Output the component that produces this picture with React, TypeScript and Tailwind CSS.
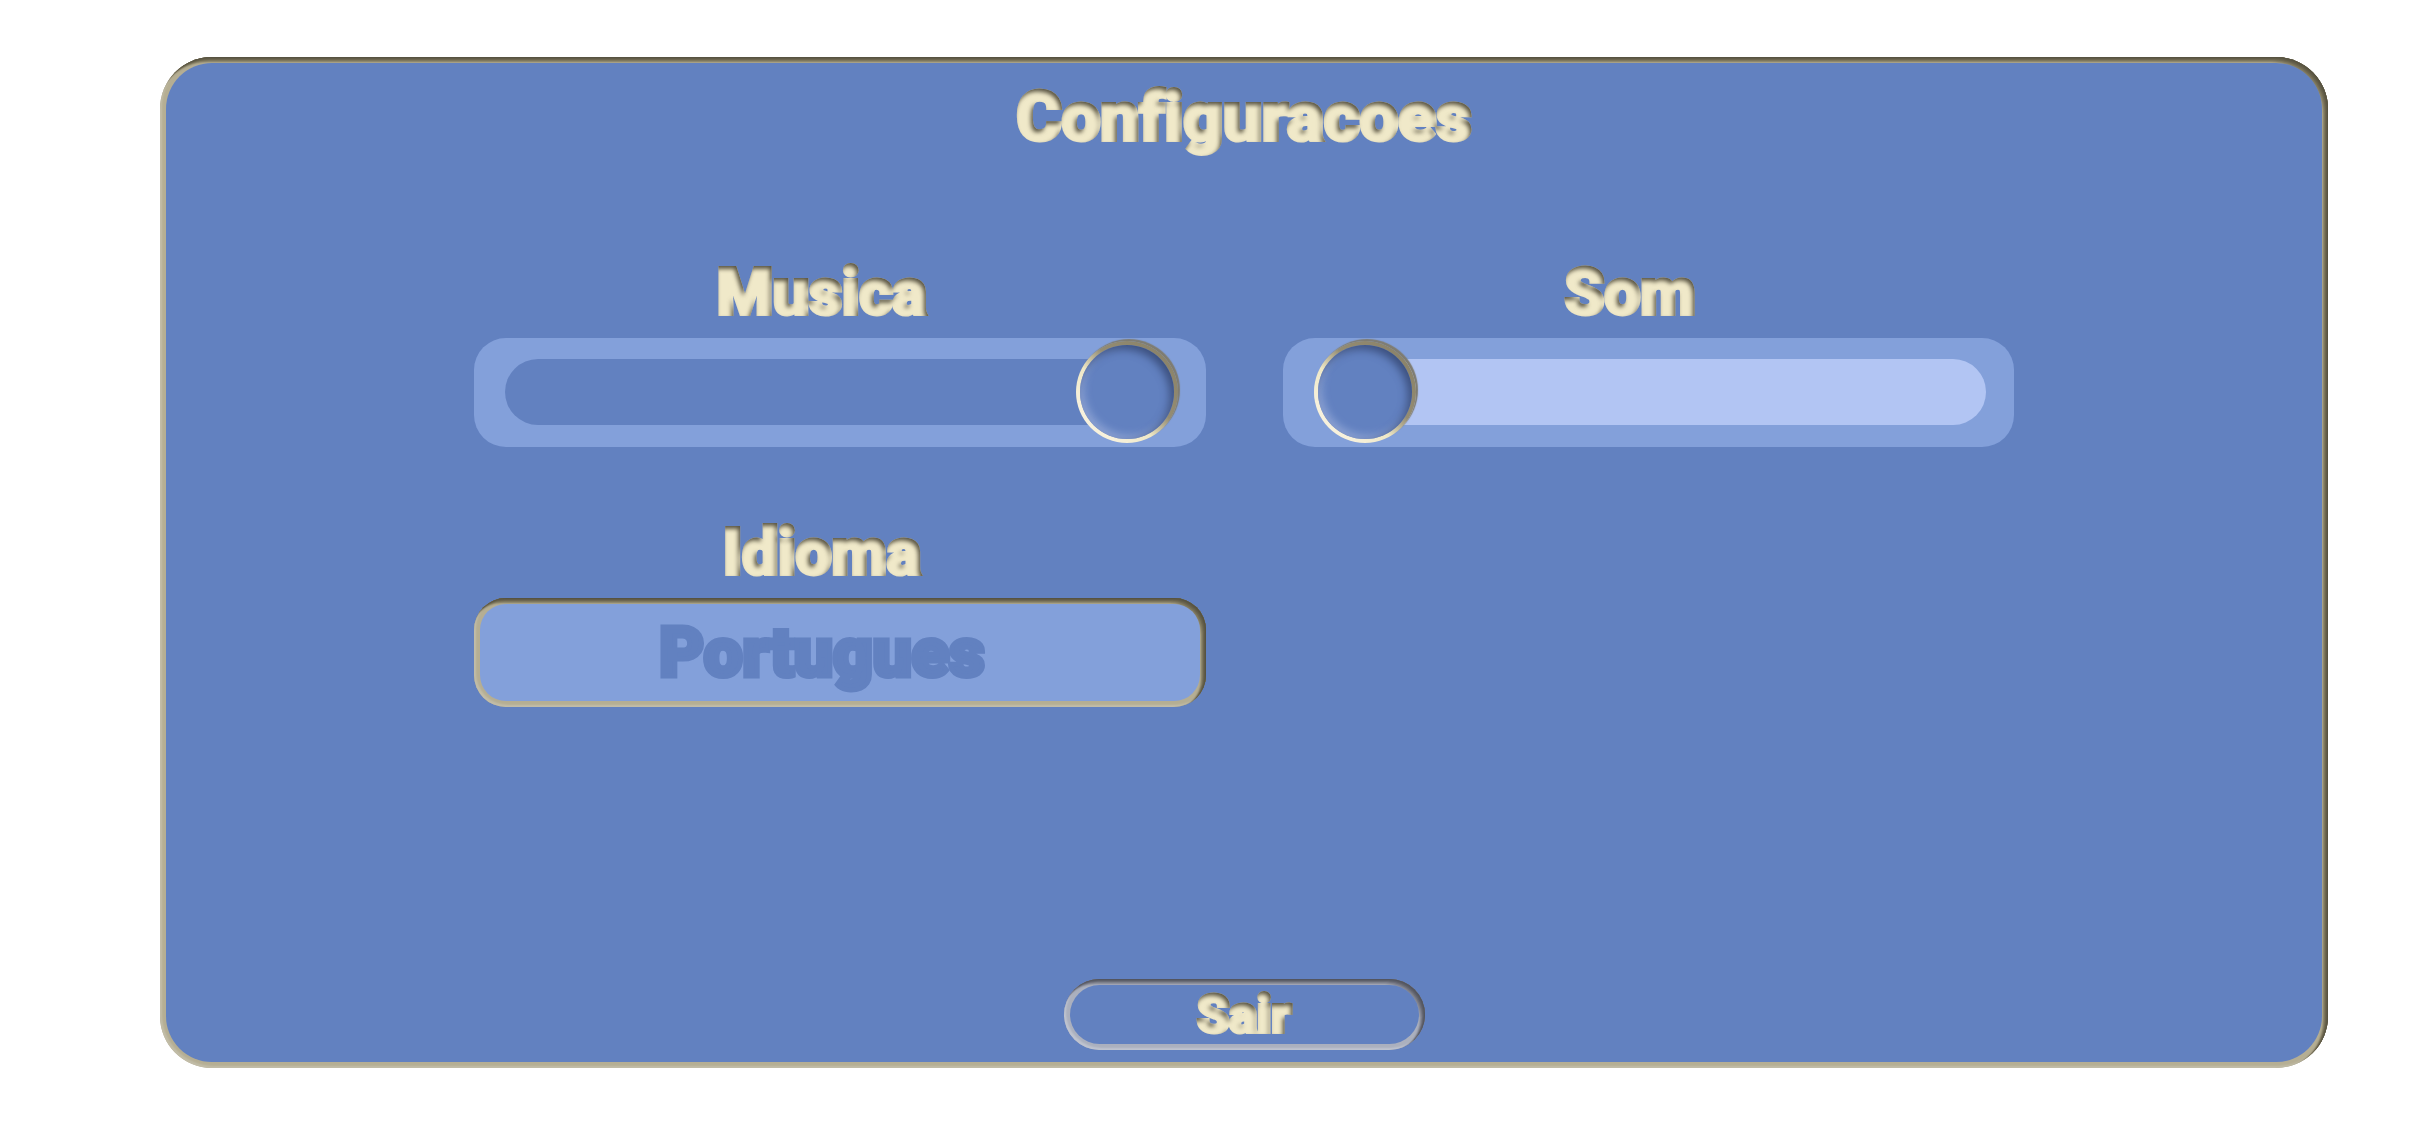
import { useId, useState } from 'react';
import type { CSSProperties, ReactNode } from 'react';

const LANGUAGES = ['Portugues', 'English', 'Espanol'];

// Stacked inset shadows: dark on the top and right edges, light on the others
const GOLD_BEVEL =
  'p-1.5 bg-[#b5ae93] shadow-[inset_-1px_1px_1px_#575341,inset_-2px_2px_1px_#625d49,inset_-3px_3px_1px_#6e6851,inset_-4px_4px_2px_#7b755c,inset_-5px_5px_2px_#8b846a,inset_2px_-2px_2px_#c2bda8]';
const SILVER_BEVEL =
  'p-1.5 bg-[#abb0be] shadow-[inset_-1px_1px_1px_#53555f,inset_-2px_2px_1px_#5e606a,inset_-3px_3px_1px_#6c6e79,inset_-4px_4px_2px_#7c7e8a,inset_-5px_5px_2px_#8c8f9b,inset_2px_-2px_2px_#bfc4d0]';

const LETTERING = "font-['Roboto','Liberation_Sans',sans-serif] font-black [font-variant-ligatures:none]";
const CARVED = 'text-[#f0e9c9] [-webkit-text-stroke:4px_#f0e9c9] [filter:url(#carved)]';

export default function App() {
  const [music, setMusic] = useState(100);
  const [sound, setSound] = useState(0);
  const [language, setLanguage] = useState(LANGUAGES[0]);

  return (
    <main className={`flex min-h-screen bg-white pt-[57px] pr-[108px] pb-[57px] pl-40 ${LETTERING}`}>
      <CarvedFilter />
      <section className={`flex flex-1 rounded-[52px] ${GOLD_BEVEL}`}>
        <div className="flex flex-1 flex-col items-center rounded-[46px] bg-[#6281c0] pt-1 pb-3">
          <h1 className={`text-[69px] leading-[100px] ${CARVED}`}>Configuracoes</h1>

          <div className="mt-[84px] grid w-full grid-cols-2 gap-x-[77px] gap-y-[64px] px-[14.3%]">
            <VolumeField label="Musica" value={music} onChange={setMusic} />
            <VolumeField label="Som" value={sound} onChange={setSound} />
            <LanguageField label="Idioma" value={language} onChange={setLanguage} />
          </div>

          <button type="button" className={`mt-auto flex w-[361px] cursor-pointer rounded-full ${SILVER_BEVEL}`}>
            <span className="flex-1 rounded-full bg-[#6281c0]">
              <span className={`block text-[52px] leading-[59px] ${CARVED}`}>Sair</span>
            </span>
          </button>
        </div>
      </section>
    </main>
  );
}

function Field({ id, label, children }: { id: string; label: string; children: ReactNode }) {
  return (
    <div className="flex flex-col">
      <label htmlFor={id} className={`mb-[3px] pr-9 text-center text-[64px] leading-[84px] ${CARVED}`}>
        {label}
      </label>
      {children}
    </div>
  );
}

function VolumeField({
  label,
  value,
  onChange,
}: {
  label: string;
  value: number;
  onChange: (value: number) => void;
}) {
  const id = useId();

  return (
    <Field id={id} label={label}>
      <div className="flex h-[109px] items-center rounded-[32px] bg-[#83a0da] pr-7 pb-0.5 pl-[31px]">
        <input
          id={id}
          type="range"
          min={0}
          max={100}
          value={value}
          onChange={e => onChange(Number(e.target.value))}
          style={{ '--fill': `${value}%` } as CSSProperties}
          className="w-full cursor-pointer appearance-none rounded-full bg-transparent [&::-webkit-slider-runnable-track]:h-[66px] [&::-webkit-slider-runnable-track]:rounded-full [&::-webkit-slider-runnable-track]:bg-[linear-gradient(to_right,#6281c0_var(--fill),#b2c5f3_var(--fill))] [&::-webkit-slider-thumb]:-mt-[18px] [&::-webkit-slider-thumb]:size-[102px] [&::-webkit-slider-thumb]:appearance-none [&::-webkit-slider-thumb]:rounded-full [&::-webkit-slider-thumb]:border-4 [&::-webkit-slider-thumb]:border-transparent [&::-webkit-slider-thumb]:[background:linear-gradient(#6281c0,#6281c0)_padding-box,linear-gradient(45deg,#f7f1dc_20%,#efe8c6_40%,#948c72_58%,#877f66)_border-box] [&::-webkit-slider-thumb]:shadow-[2px_-2px_1px_#7f7c70,inset_-4px_4px_8px_#3b4f7d,inset_3px_-3px_8px_#93a8d8]"
        />
      </div>
    </Field>
  );
}

function LanguageField({
  label,
  value,
  onChange,
}: {
  label: string;
  value: string;
  onChange: (value: string) => void;
}) {
  const id = useId();

  return (
    <Field id={id} label={label}>
      <div className={`flex rounded-[32px] ${GOLD_BEVEL}`}>
        <select
          id={id}
          value={value}
          onChange={e => onChange(e.target.value)}
          className="h-[97px] flex-1 cursor-pointer appearance-none rounded-[26px] bg-[#83a0da] pr-9 text-center text-[69px] leading-[96px] text-[#6281c0] [-webkit-text-stroke:5px_#6281c0]"
        >
          {LANGUAGES.map(name => (
            <option key={name}>{name}</option>
          ))}
        </select>
      </div>
    </Field>
  );
}

// Inner shadow from the top right, used by all the cream lettering
function CarvedFilter() {
  return (
    <svg width="0" height="0" className="absolute" aria-hidden="true">
      <filter id="carved" colorInterpolationFilters="sRGB">
        <feGaussianBlur in="SourceAlpha" stdDeviation="2" />
        <feOffset dx="-2" dy="3" result="cast" />
        <feComposite in="SourceAlpha" in2="cast" operator="out" result="shade" />
        <feFlood floodColor="#3f3b2b" floodOpacity="0.85" />
        <feComposite in2="shade" operator="in" result="shadow" />
        <feMerge>
          <feMergeNode in="SourceGraphic" />
          <feMergeNode in="shadow" />
        </feMerge>
      </filter>
    </svg>
  );
}
